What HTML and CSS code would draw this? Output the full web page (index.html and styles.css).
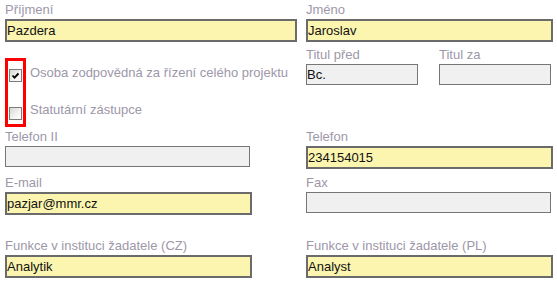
FILE: index.html
```html
<!DOCTYPE html>
<html lang="cs">
<head>
<meta charset="utf-8">
<title>Kontaktní osoba</title>
<link rel="stylesheet" href="styles.css">
</head>
<body>
<div class="form">
  <div class="row row-a">
    <div class="field wide">
      <label class="lbl">Příjmení</label>
      <input class="inp req" value="Pazdera" readonly>
    </div>
    <div class="field">
      <label class="lbl">Jméno</label>
      <input class="inp req" value="Jaroslav" readonly>
    </div>
  </div>
  <div class="row row-b">
    <div class="checks">
      <div class="redbox">
        <span class="cb"><svg viewBox="0 0 11 11" width="11" height="11"><polyline points="2.5,5.5 4.5,7.6 8.5,3.5" fill="none" stroke="#000" stroke-width="1.8"/></svg></span>
        <span class="cb"></span>
      </div>
      <div class="cb-labels">
        <div class="cb-text">Osoba zodpovědná za řízení celého projektu</div>
        <div class="cb-text second">Statutární zástupce</div>
      </div>
    </div>
    <div class="titles">
      <div class="field">
        <label class="lbl">Titul před</label>
        <input class="inp opt short" value="Bc." readonly>
      </div>
      <div class="field">
        <label class="lbl">Titul za</label>
        <input class="inp opt short" value="" readonly>
      </div>
    </div>
  </div>
  <div class="row row-c">
    <div class="field">
      <label class="lbl">Telefon II</label>
      <input class="inp opt" value="" readonly>
    </div>
    <div class="field">
      <label class="lbl">Telefon</label>
      <input class="inp req" value="234154015" readonly>
    </div>
  </div>
  <div class="row row-d">
    <div class="field">
      <label class="lbl">E-mail</label>
      <input class="inp req" value="pazjar@mmr.cz" readonly>
    </div>
    <div class="field">
      <label class="lbl">Fax</label>
      <input class="inp opt" value="" readonly>
    </div>
  </div>
  <div class="row row-e">
    <div class="field">
      <label class="lbl">Funkce v instituci žadatele (CZ)</label>
      <input class="inp req" value="Analytik" readonly>
    </div>
    <div class="field">
      <label class="lbl">Funkce v instituci žadatele (PL)</label>
      <input class="inp req" value="Analyst" readonly>
    </div>
  </div>
</div>
</body>
</html>
```

FILE: styles.css
```css
body {
  margin: 0;
  background: #fff;
  font-family: "Liberation Sans", Arial, sans-serif;
}

.form {
  padding: 2px 0 0 5px;
}

.row {
  display: grid;
  grid-template-columns: 292px 247px;
  column-gap: 9px;
  align-items: start;
}

.row-b { margin-top: 5px; }
.row-c { margin-top: 2px; }
.row-d { margin-top: 6px; }
.row-e { margin-top: 23px; }

.lbl {
  display: block;
  font-size: 13px;
  line-height: 16px;
  color: #9d97a8;
  margin-bottom: 1px;
  white-space: nowrap;
}

.inp {
  display: block;
  box-sizing: border-box;
  margin: 0;
  padding: 0 0 1px 0;
  font-family: "Liberation Sans", Arial, sans-serif;
  font-size: 13px;
  font-weight: normal;
  color: #111;
  outline: none;
  border-radius: 0;
}

.req {
  width: 247px;
  height: 23px;
  border: 2px solid #6b6b6b;
  background: #fbf5b0;
}

.opt {
  width: 245px;
  height: 21px;
  border: 1px solid #767676;
  background: #f0f0f0;
}

.wide .req {
  width: 292px;
}

.opt.short {
  width: 112px;
}

.titles {
  display: flex;
  gap: 21px;
}

.checks {
  display: flex;
  margin-top: 11px;
}

.redbox {
  display: flex;
  flex-direction: column;
  gap: 25px;
  border: 3px solid #f00;
  padding: 8px 1px 4px;
}

.cb {
  display: block;
  box-sizing: border-box;
  width: 13px;
  height: 13px;
  border: 1px solid #7c7c7c;
  background: linear-gradient(135deg, #d8d8d2 0%, #f4f4f2 60%, #ffffff 100%);
}

.cb svg {
  display: block;
}

.cb-labels {
  margin-left: 4px;
  padding-top: 7px;
}

.cb-text {
  font-size: 13px;
  line-height: 16px;
  color: #9d97a8;
  white-space: nowrap;
}

.cb-text.second {
  margin-top: 21px;
}
```
